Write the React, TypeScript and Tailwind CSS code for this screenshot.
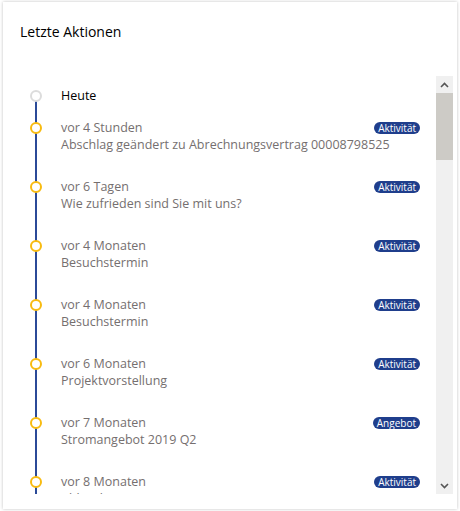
import React from 'react';

type Entry = { when: string; text: string; tag: string };

const entries: Entry[] = [
  { when: 'vor 4 Stunden', text: 'Abschlag geändert zu Abrechnungsvertrag 00008798525', tag: 'Aktivität' },
  { when: 'vor 6 Tagen', text: 'Wie zufrieden sind Sie mit uns?', tag: 'Aktivität' },
  { when: 'vor 4 Monaten', text: 'Besuchstermin', tag: 'Aktivität' },
  { when: 'vor 4 Monaten', text: 'Besuchstermin', tag: 'Aktivität' },
  { when: 'vor 6 Monaten', text: 'Projektvorstellung', tag: 'Aktivität' },
  { when: 'vor 7 Monaten', text: 'Stromangebot 2019 Q2', tag: 'Angebot' },
  { when: 'vor 8 Monaten', text: 'Ablesehinweis', tag: 'Aktivität' },
];

function Chevron({ up }: { up?: boolean }) {
  return (
    <svg width="9" height="6" viewBox="0 0 9 6" className="block">
      <polyline
        points={up ? '1,5 4.5,1.5 8,5' : '1,1 4.5,4.5 8,1'}
        fill="none"
        stroke="#555"
        strokeWidth="1.6"
      />
    </svg>
  );
}

export default function App() {
  return (
    <div
      className="w-[460px] h-[511px] bg-white pt-[2px] px-[3px] pb-[2px]"
      style={{ fontFamily: '"Open Sans", "Noto Sans", sans-serif' }}
    >
      <div className="h-full flex flex-col bg-white shadow-[0_0_3px_rgba(0,0,0,0.25)]">
        <div className="pl-[17px] pt-[20px] h-[74px] text-[14px] leading-[20px] text-black">Letzte Aktionen</div>

        <div className="flex h-[418px] mr-[4px]">
          <div className="relative flex-1 overflow-hidden pt-[11px] pr-[16px]">
            <div className="absolute left-[32px] top-[20px] bottom-0 w-[2px] bg-[#2b4a98]" />

            <div className="relative flex items-start h-[32px] pl-[27px]">
              <span className="mt-[3px] w-[12px] h-[12px] shrink-0 rounded-full border-2 border-[#dcdcdc] bg-white" />
              <span className="ml-[19px] text-[12.5px] leading-[17px] text-black">Heute</span>
            </div>

            {entries.map((e, i) => (
              <div key={i} className="relative flex items-start h-[59px] pl-[27px]">
                <span className="mt-[3px] w-[12px] h-[12px] shrink-0 rounded-full border-2 border-[#f8bb10] bg-white" />
                <div className="ml-[19px] flex-1 text-[12.5px] leading-[17px] text-[#756f6f]">
                  <div className="flex items-center justify-between">
                    <span>{e.when}</span>
                    <span className="rounded-full bg-[#1f3e8c] px-[4px] text-[10px] leading-[12px] text-white">{e.tag}</span>
                  </div>
                  <div>{e.text}</div>
                </div>
              </div>
            ))}
          </div>

          <div className="w-[17px] shrink-0 flex flex-col bg-[#f0f0f0]">
            <div className="h-[17px] flex items-center justify-center">
              <Chevron up />
            </div>
            <div className="h-[67px] bg-[#cdcbc6]" />
            <div className="flex-1" />
            <div className="h-[17px] flex items-center justify-center">
              <Chevron />
            </div>
          </div>
        </div>
      </div>
    </div>
  );
}
